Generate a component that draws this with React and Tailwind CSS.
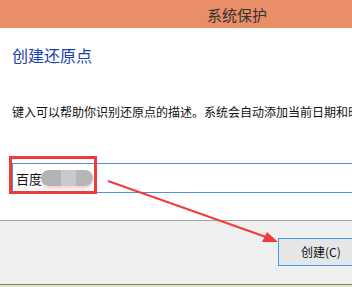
import React from 'react';

const cjk = { fontFamily: '"Noto Sans CJK SC", "Noto Sans", sans-serif' };

export default function App() {
  return (
    <div className="relative w-[352px] h-[287px] overflow-hidden bg-white flex flex-col" style={cjk}>
      {/* title bar */}
      <div className="h-[28px] shrink-0 bg-[#e98e66] flex items-center pl-[207px]">
        <span className="text-[15px] leading-none text-[#333]">系统保护</span>
      </div>

      {/* body */}
      <div className="h-[192px] shrink-0 flex flex-col pl-[12px]">
        <h1 className="mt-[16px] text-[16px] leading-[22px] text-[#1a3fb0] whitespace-nowrap">创建还原点</h1>
        <p className="mt-[38px] text-[12px] leading-[16px] text-[#111] whitespace-nowrap">
          键入可以帮助你识别还原点的描述。系统会自动添加当前日期和时间。
        </p>
        <div className="relative mt-[43px] mr-[-10px] h-[30px] border border-[#4a90e2] flex items-center pl-[3px]">
          <span className="text-[13px] leading-none text-[#111]">百度</span>
          <div className="relative ml-[-1px] h-[16px] w-[52px] flex rounded-full overflow-hidden shadow-[0_2px_3px_#ffc8c8]">
            <div className="w-[20px] bg-[#b3b3b3]" />
            <div className="w-[15px] bg-[#c9c9c9]" />
            <div className="flex-1 bg-[#b6b6b6]" />
          </div>
          {/* red highlight box */}
          <div className="absolute left-[-4px] top-[-8px] w-[88px] h-[38px] border-[3px] border-[#f03a3a]" />
        </div>
      </div>

      {/* footer */}
      <div className="flex-1 bg-[#f0f0f0] border-t border-[#a0a0a0] flex justify-end items-start pt-[17px] border-b border-b-[#c0694a]">
        <button className="w-[84px] mr-[-10px] h-[28px] border border-[#3c9af0] bg-[#e6e6e6] text-[12px] text-[#111] flex items-center pl-[22px]">
          创建(C)
        </button>
      </div>
      <div className="h-[2px] shrink-0 bg-[#d4ecd4]" />

      {/* annotation arrow */}
      <svg className="absolute left-0 top-0 pointer-events-none" width="352" height="287">
        <line x1="108" y1="181" x2="266" y2="237" stroke="#f23c3c" strokeWidth="2" />
        <polygon points="278,242 262,242 267,232" fill="#f23c3c" />
      </svg>
    </div>
  );
}
